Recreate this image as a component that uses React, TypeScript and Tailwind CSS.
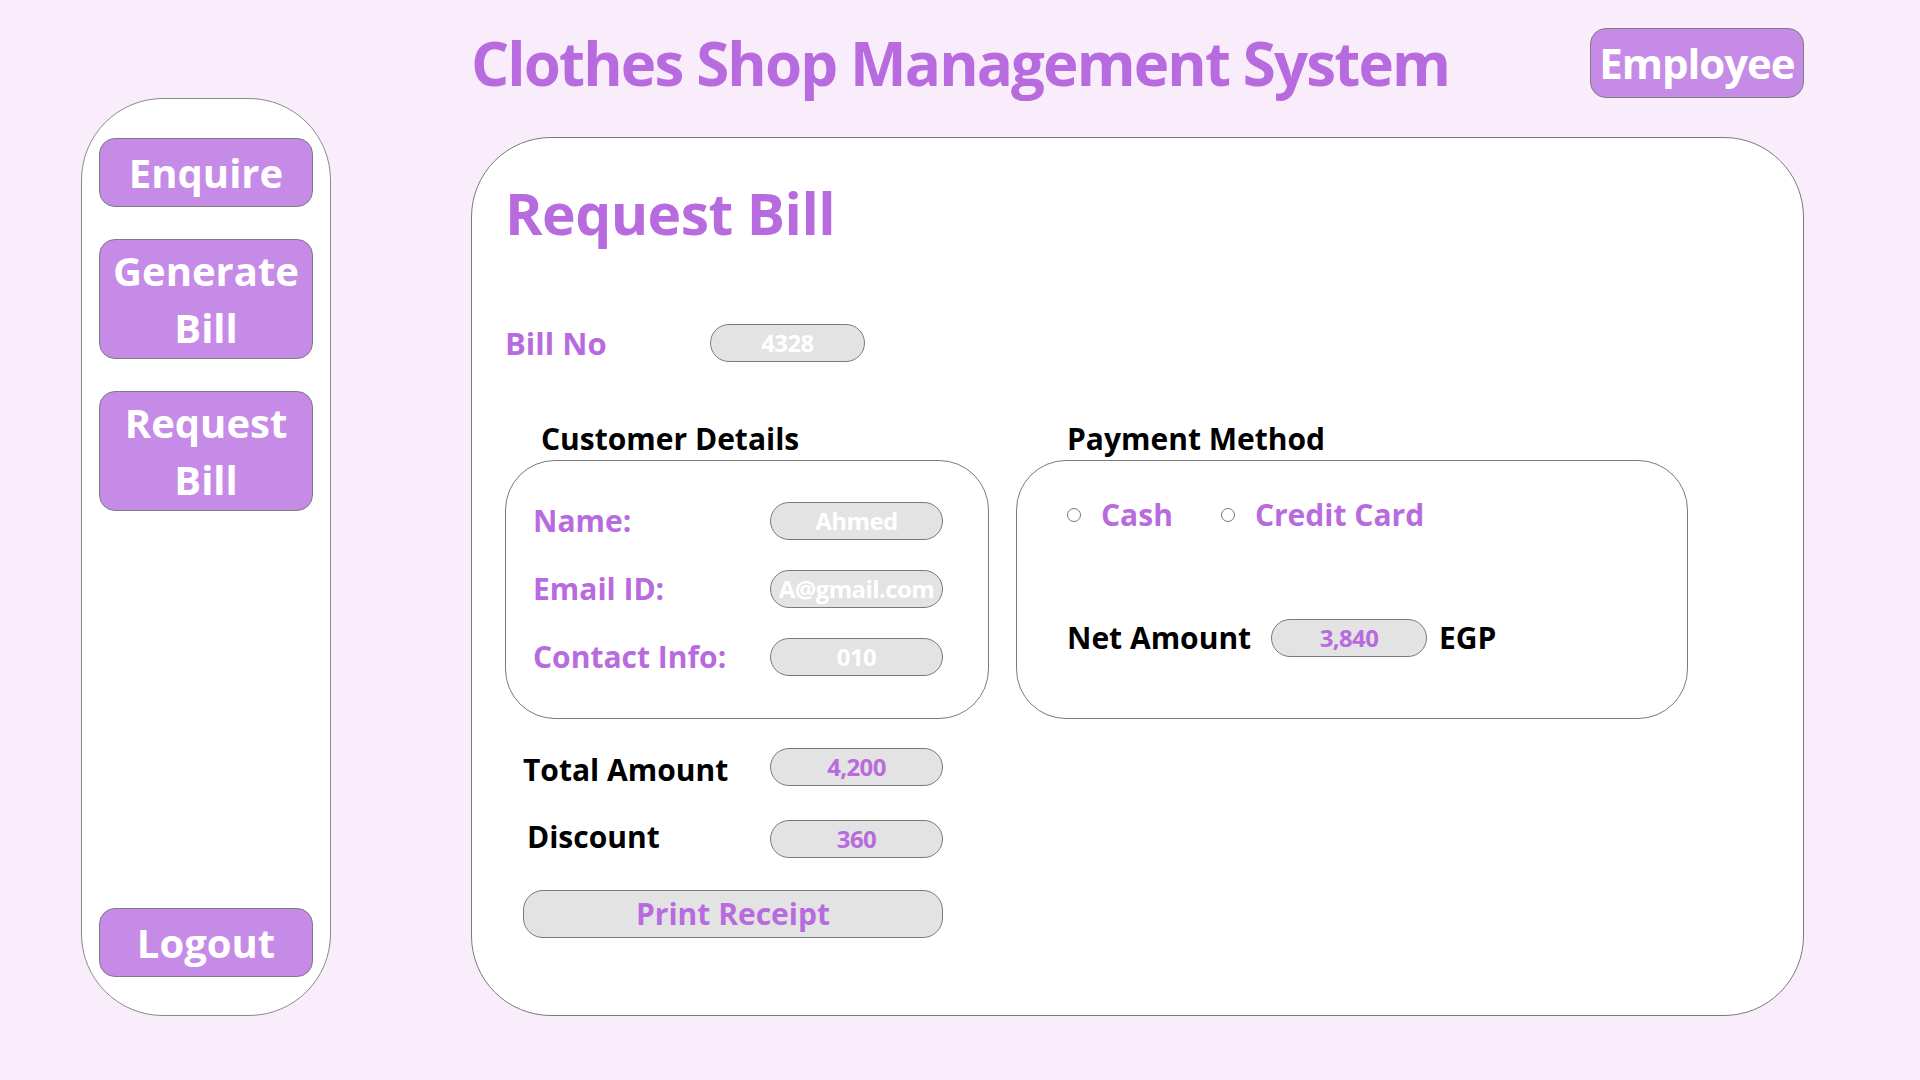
import React from 'react';

const customerRows = [
  { label: 'Name:', value: 'Ahmed' },
  { label: 'Email ID:', value: 'A@gmail.com' },
  { label: 'Contact Info:', value: '010' },
];

function SideButton({ lines, tall }: { lines: string[]; tall?: boolean }) {
  return (
    <button
      className={`flex w-[214px] flex-col items-center justify-center rounded-[16px] border border-[#7d7d7d] bg-[#C68BE6] text-[40px] font-bold text-white ${
        tall ? 'h-[120px] leading-[57px]' : 'h-[69px] leading-none'
      }`}
    >
      {lines.map((l) => (
        <span key={l}>{l}</span>
      ))}
    </button>
  );
}

function Pill({ value, purple, w = 'w-[173px]' }: { value: string; purple?: boolean; w?: string }) {
  return (
    <div
      className={`flex h-[38px] ${w} items-center justify-center whitespace-nowrap rounded-full border border-[#7a7a7a] bg-[#E3E3E3] text-[24px] font-bold leading-none tracking-tight ${
        purple ? 'text-[#B86BDE]' : 'text-white'
      }`}
    >
      {value}
    </div>
  );
}

function Radio({ label }: { label: string }) {
  return (
    <div className="flex items-center gap-[20px]">
      <span className="h-[14px] w-[14px] rounded-full border border-[#777] bg-white" />
      <span className="text-[30px] font-bold leading-none text-[#B86BDE]">{label}</span>
    </div>
  );
}

export default function App() {
  return (
    <div className="flex h-[1080px] w-[1920px] gap-[140px] bg-[#F9EDFC] pl-[81px] font-['Open_Sans',sans-serif]">
      {/* sidebar */}
      <aside className="mt-[98px] flex h-[918px] w-[250px] flex-col items-center justify-between rounded-[82px] border border-[#8a8a8a] bg-white pb-[38px] pt-[39px]">
        <div className="flex flex-col gap-[32px]">
          <SideButton lines={['Enquire']} />
          <SideButton lines={['Generate', 'Bill']} tall />
          <SideButton lines={['Request', 'Bill']} tall />
        </div>
        <SideButton lines={['Logout']} />
      </aside>

      {/* main column */}
      <div className="flex w-[1333px] flex-col">
        <header className="mt-[28px] flex h-[70px] items-center justify-between">
          <h1 className="text-[60px] font-bold leading-none tracking-[-0.031em] text-[#B86BDE]">
            Clothes Shop Management System
          </h1>
          <button className="flex h-[70px] w-[214px] items-center justify-center rounded-[16px] border border-[#7d7d7d] bg-[#C68BE6] text-[42px] font-bold leading-none tracking-tight text-white">
            Employee
          </button>
        </header>

        <main className="mt-[39px] flex h-[879px] flex-col rounded-[80px] border border-[#7a7a7a] bg-white pl-[33px] pt-[47px]">
          <h2 className="text-[57px] font-bold leading-none tracking-[-0.01em] text-[#B86BDE]">Request Bill</h2>

          <div className="mt-[82px] flex items-center">
            <span className="w-[205px] text-[31px] font-bold leading-none text-[#B86BDE]">Bill No</span>
            <Pill value="4328" w="w-[155px]" />
          </div>

          <div className="mt-[62px] flex gap-[27px]">
            {/* customer details */}
            <div className="flex w-[484px] flex-col">
              <h3 className="pl-[36px] text-[30px] font-bold leading-none text-black">Customer Details</h3>
              <div className="mt-[6px] flex h-[259px] flex-col gap-[30px] rounded-[50px] border border-[#7a7a7a] pl-[27px] pt-[41px]">
                {customerRows.map((r) => (
                  <div key={r.label} className="flex items-center">
                    <span className="w-[237px] text-[30px] font-bold leading-none text-[#B86BDE]">{r.label}</span>
                    <Pill value={r.value} />
                  </div>
                ))}
              </div>

              <div className="mt-[29px] flex items-center pl-[18px]">
                <span className="mt-[6px] w-[247px] text-[30px] font-bold leading-none text-black">Total Amount</span>
                <Pill value="4,200" purple />
              </div>
              <div className="mt-[34px] flex items-center pl-[22px]">
                <span className="mb-[4px] w-[243px] text-[30px] font-bold leading-none text-black">Discount</span>
                <Pill value="360" purple />
              </div>
              <button className="ml-[18px] mt-[32px] flex h-[48px] w-[420px] items-center justify-center rounded-[20px] border border-[#7a7a7a] bg-[#E3E3E3] text-[30px] font-bold leading-none text-[#B86BDE]">
                Print Receipt
              </button>
            </div>

            {/* payment method */}
            <div className="flex w-[672px] flex-col">
              <h3 className="pl-[51px] text-[30px] font-bold leading-none text-black">Payment Method</h3>
              <div className="mt-[6px] flex h-[259px] flex-col rounded-[50px] border border-[#7a7a7a] pl-[50px] pt-[35px]">
                <div className="flex h-[38px] items-center gap-[48px]">
                  <Radio label="Cash" />
                  <Radio label="Credit Card" />
                </div>
                <div className="mt-[85px] flex items-center">
                  <span className="w-[204px] text-[30px] font-bold leading-none text-black">Net Amount</span>
                  <Pill value="3,840" purple w="w-[156px]" />
                  <span className="ml-[12px] text-[30px] font-bold leading-none text-black">EGP</span>
                </div>
              </div>
            </div>
          </div>
        </main>
      </div>
    </div>
  );
}
